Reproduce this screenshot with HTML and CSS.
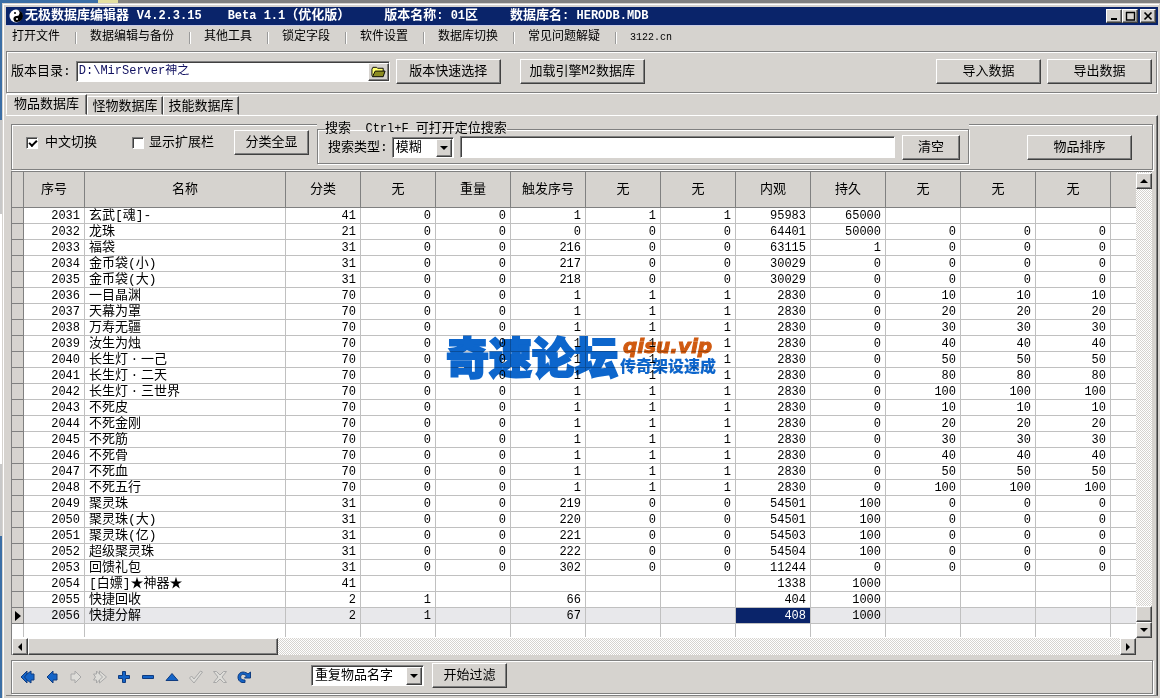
FILE: index.html
```html
<!DOCTYPE html>
<html lang="zh-CN">
<head>
<meta charset="utf-8">
<title>无极数据库编辑器</title>
<link rel="stylesheet" href="styles.css">
</head>
<body>
<div class="window">
  <header class="titlebar">
    <svg class="logo" viewBox="0 0 14 14"><circle cx="7" cy="7" r="6.500" fill="#fff"/><path d="M8 1a6 6 0 0 1 0 12 3 3 0 0 1-1-6 3 3 0 0 0 1-6z" fill="#000"/><circle cx="6" cy="4" r="1" fill="#000"/><circle cx="8" cy="10" r="1" fill="#fff"/></svg>
    <h1 class="caption"><span>无极数据库编辑器 <span class="lat">V4.2.3.15</span></span><span class="beta"><span class="lat">Beta 1.1</span>（优化版）</span><span class="version">版本名称<span class="lat">: 01</span>区</span><span>数据库名<span class="lat">: HERODB.MDB</span></span></h1>
    <div class="winbuttons">
      <button class="btn winbtn" aria-label="最小化"><svg viewBox="0 0 12 10"><path d="M3 8h6" stroke="#000" stroke-width="2"/></svg></button>
      <button class="btn winbtn" aria-label="最大化"><svg viewBox="0 0 12 10"><path d="M2 1.500h9M2.500 1v8h8V1" stroke="#000" stroke-width="1.400" fill="none"/></svg></button>
      <button class="btn winbtn close" aria-label="关闭"><svg viewBox="0 0 12 10"><path d="M2.500 1.500l7 7M9.500 1.500l-7 7" stroke="#000" stroke-width="1.700"/></svg></button>
    </div>
  </header>
  <nav class="menu">
    <a href="#">打开文件</a><a href="#">数据编辑与备份</a><a href="#">其他工具</a><a href="#">锁定字段</a><a href="#">软件设置</a><a href="#">数据库切换</a><a href="#">常见问题解疑</a><a href="#" class="site">3122.cn</a>
  </nav>
  <section class="panel pathbar">
    <label for="path">版本目录:</label>
    <div class="pathbox sunken">
      <input id="path" class="field" type="text" value="D:\MirServer神之">
      <button class="btn folder" aria-label="浏览"><svg viewBox="0 0 16 12"><path d="M1 10V3l1-2h4l1 1h6v3" fill="#ffff70" stroke="#000"/><path d="M1.500 11l3-6H15l-2 6z" fill="#8c8c20" stroke="#000"/></svg></button>
    </div>
    <button class="btn w105">版本快速选择</button>
    <button class="btn w125">加载引擎<span class="lat">M2</span>数据库</button>
    <span class="grow"></span>
    <button class="btn w105">导入数据</button>
    <button class="btn w105 snug">导出数据</button>
  </section>
  <div class="tabs" role="tablist">
    <button class="tab active" role="tab">物品数据库</button><button class="tab" role="tab">怪物数据库</button><button class="tab" role="tab">技能数据库</button>
  </div>
  <main class="page">
    <section class="panel filterbar">
      <label class="check first"><input type="checkbox" checked><span>中文切换</span></label>
      <label class="check"><input type="checkbox"><span>显示扩展栏</span></label>
      <button class="btn w75">分类全显</button>
      <div class="searchwrap">
        <fieldset class="search">
          <legend>搜索<span class="lat">  Ctrl+F </span>可打开定位搜索</legend>
          <label for="kind">搜索类型:</label>
          <span class="combo sunken kind"><select id="kind"><option>模糊</option></select><span class="btn drop"><svg viewBox="0 0 8 4"><path d="M0 0h8L4 4z"/></svg></span></span>
          <input class="field sunken query" type="text" aria-label="搜索内容">
          <button class="btn w58">清空</button>
        </fieldset>
      </div>
      <span class="grow"></span>
      <button class="btn w105 sort">物品排序</button>
    </section>
    <section class="grid">
      <div class="sheet">
        <table>
          <colgroup><col class="c-ind"><col class="c-seq"><col class="c-name"><col class="c-num" span="11"><col></colgroup>
          <thead><tr><th></th><th>序号</th><th>名称</th><th>分类</th><th>无</th><th>重量</th><th>触发序号</th><th>无</th><th>无</th><th>内观</th><th>持久</th><th>无</th><th>无</th><th>无</th><th></th></tr></thead>
          <tbody>
<tr><td><td>2031<td>玄武[魂]-<td>41<td>0<td>0<td>1<td>1<td>1<td>95983<td>65000<td><td><td><td></tr>
<tr><td><td>2032<td>龙珠<td>21<td>0<td>0<td>0<td>0<td>0<td>64401<td>50000<td>0<td>0<td>0<td></tr>
<tr><td><td>2033<td>福袋<td>31<td>0<td>0<td>216<td>0<td>0<td>63115<td>1<td>0<td>0<td>0<td></tr>
<tr><td><td>2034<td>金币袋(小)<td>31<td>0<td>0<td>217<td>0<td>0<td>30029<td>0<td>0<td>0<td>0<td></tr>
<tr><td><td>2035<td>金币袋(大)<td>31<td>0<td>0<td>218<td>0<td>0<td>30029<td>0<td>0<td>0<td>0<td></tr>
<tr><td><td>2036<td>一目晶渊<td>70<td>0<td>0<td>1<td>1<td>1<td>2830<td>0<td>10<td>10<td>10<td></tr>
<tr><td><td>2037<td>天幕为罩<td>70<td>0<td>0<td>1<td>1<td>1<td>2830<td>0<td>20<td>20<td>20<td></tr>
<tr><td><td>2038<td>万寿无疆<td>70<td>0<td>0<td>1<td>1<td>1<td>2830<td>0<td>30<td>30<td>30<td></tr>
<tr><td><td>2039<td>汝生为烛<td>70<td>0<td>0<td>1<td>1<td>1<td>2830<td>0<td>40<td>40<td>40<td></tr>
<tr><td><td>2040<td>长生灯<i>·</i>一己<td>70<td>0<td>0<td>1<td>1<td>1<td>2830<td>0<td>50<td>50<td>50<td></tr>
<tr><td><td>2041<td>长生灯<i>·</i>二天<td>70<td>0<td>0<td>1<td>1<td>1<td>2830<td>0<td>80<td>80<td>80<td></tr>
<tr><td><td>2042<td>长生灯<i>·</i>三世界<td>70<td>0<td>0<td>1<td>1<td>1<td>2830<td>0<td>100<td>100<td>100<td></tr>
<tr><td><td>2043<td>不死皮<td>70<td>0<td>0<td>1<td>1<td>1<td>2830<td>0<td>10<td>10<td>10<td></tr>
<tr><td><td>2044<td>不死金刚<td>70<td>0<td>0<td>1<td>1<td>1<td>2830<td>0<td>20<td>20<td>20<td></tr>
<tr><td><td>2045<td>不死筋<td>70<td>0<td>0<td>1<td>1<td>1<td>2830<td>0<td>30<td>30<td>30<td></tr>
<tr><td><td>2046<td>不死骨<td>70<td>0<td>0<td>1<td>1<td>1<td>2830<td>0<td>40<td>40<td>40<td></tr>
<tr><td><td>2047<td>不死血<td>70<td>0<td>0<td>1<td>1<td>1<td>2830<td>0<td>50<td>50<td>50<td></tr>
<tr><td><td>2048<td>不死五行<td>70<td>0<td>0<td>1<td>1<td>1<td>2830<td>0<td>100<td>100<td>100<td></tr>
<tr><td><td>2049<td>聚灵珠<td>31<td>0<td>0<td>219<td>0<td>0<td>54501<td>100<td>0<td>0<td>0<td></tr>
<tr><td><td>2050<td>聚灵珠(大)<td>31<td>0<td>0<td>220<td>0<td>0<td>54501<td>100<td>0<td>0<td>0<td></tr>
<tr><td><td>2051<td>聚灵珠(亿)<td>31<td>0<td>0<td>221<td>0<td>0<td>54503<td>100<td>0<td>0<td>0<td></tr>
<tr><td><td>2052<td>超级聚灵珠<td>31<td>0<td>0<td>222<td>0<td>0<td>54504<td>100<td>0<td>0<td>0<td></tr>
<tr><td><td>2053<td>回馈礼包<td>31<td>0<td>0<td>302<td>0<td>0<td>11244<td>0<td>0<td>0<td>0<td></tr>
<tr><td></td><td>2054</td><td>[白嫖]★神器★</td><td>41</td><td></td><td></td><td></td><td></td><td></td><td>1338</td><td>1000</td><td></td><td></td><td></td><td></td></tr>
<tr><td></td><td>2055</td><td>快捷回收</td><td>2</td><td>1</td><td></td><td>66</td><td></td><td></td><td>404</td><td>1000</td><td></td><td></td><td></td><td></td></tr>
<tr class="current"><td><svg class="pointer" viewBox="0 0 6 10"><path d="M0 0l6 5-6 5z"/></svg></td><td>2056</td><td>快捷分解</td><td>2</td><td>1</td><td></td><td>67</td><td></td><td></td><td class="selected">408</td><td>1000</td><td></td><td></td><td></td><td></td></tr>
<tr class="tail"><td></td><td></td><td></td><td></td><td></td><td></td><td></td><td></td><td></td><td></td><td></td><td></td><td></td><td></td><td></td></tr>
          </tbody>
        </table>
      </div>
      <div class="vscroll">
        <button class="btn sbtn" aria-label="向上"><svg viewBox="0 0 8 4"><path d="M0 4h8L4 0z"/></svg></button>
        <span class="grow"></span>
        <span class="btn sbtn"></span>
        <button class="btn sbtn" aria-label="向下"><svg viewBox="0 0 8 4"><path d="M0 0h8L4 4z"/></svg></button>
      </div>
      <div class="hscroll">
        <button class="btn sbtn" aria-label="向左"><svg class="side" viewBox="0 0 4 8"><path d="M4 0v8L0 4z"/></svg></button>
        <span class="btn hthumb"></span>
        <span class="grow"></span>
        <button class="btn sbtn" aria-label="向右"><svg class="side" viewBox="0 0 4 8"><path d="M0 0v8l4-4z"/></svg></button>
      </div>
    </section>
    <footer class="panel navbar">
      <button class="nav" aria-label="首条"><svg viewBox="0 0 16 16"><path d="M1 8l6-6v3l4-3v3h3v6h-3v3l-4-3v3z"/><path d="M7 5L4.500 8 7 11"/></svg></button>
      <button class="nav" aria-label="上一条"><svg viewBox="0 0 16 16"><path d="M3 8l6-6v3h4v6H9v3z"/></svg></button>
      <button class="nav off" aria-label="下一条"><svg viewBox="0 0 16 16"><path d="M13 8L7 2v3H3v6h4v3z"/></svg></button>
      <button class="nav off" aria-label="末条"><svg viewBox="0 0 16 16"><path d="M1.500 5h3V2l3 3V2l7 6-7 6v-3l-3 3v-3h-3l2-3zM7.500 5l3 3-3 3"/></svg></button>
      <button class="nav" aria-label="新增"><svg viewBox="0 0 16 16"><path d="M6.500 2.500h3v4h4v3h-4v4h-3v-4h-4v-3h4z"/></svg></button>
      <button class="nav" aria-label="删除"><svg viewBox="0 0 16 16"><path d="M2.500 6.500h11v3h-11z"/></svg></button>
      <button class="nav" aria-label="编辑"><svg viewBox="0 0 16 16"><path d="M2 11.500h12L8 4.500z"/></svg></button>
      <button class="nav off" aria-label="提交"><svg viewBox="0 0 16 16"><path d="M1.500 9l2-2 2.500 3 6.500-8 2 1L6 14z"/></svg></button>
      <button class="nav off" aria-label="取消"><svg viewBox="0 0 16 16"><path d="M1.500 2.500h3L8 6l3.500-3.500h3L10 8l4.500 5.500h-3L8 10l-3.500 3.500h-3L6 8z"/></svg></button>
      <button class="nav" aria-label="刷新"><svg viewBox="0 0 16 16"><path d="M9 13.500H6C0 12 1 3 7 3c2 0 4 1 5 2l2.500-2v6H8.500l2-2C7 3.500 3.500 6 5 9.500c1 1.500 2.500 1.500 4 1.500z"/></svg></button>
      <span class="combo sunken dup"><select aria-label="过滤方式"><option>重复物品名字</option></select><span class="btn drop"><svg viewBox="0 0 8 4"><path d="M0 0h8L4 4z"/></svg></span></span>
      <button class="btn w75">开始过滤</button>
    </footer>
  </main>
  <div class="watermark"><strong>奇速论坛</strong><div><em>qisu.vip</em><b>传奇架设速成</b></div></div>
</div>
</body>
</html>
```
FILE: styles.css
```css
*, *::before { box-sizing: border-box; }
body {
  margin: 0;
  min-height: 100vh;
  display: flex;
  flex-direction: column;
  padding: 3px 0 0 2px;
  overflow: hidden;
  color: #000;
  font: 13px/15px "Liberation Mono", "Noto Sans CJK SC", monospace;
  background:
    linear-gradient(90deg, #3b6ea5 98px, #e4e0a0 98px 118px, #808080 118px) top / 100% 3px no-repeat,
    linear-gradient(#3b6ea5 120px, #c8c8c8 120px 214px, #fff 214px 464px, #c8c8c8 464px 536px, #3b6ea5 536px);
}
button, input, select { font: inherit; color: inherit; }
button { padding: 0; }
.lat { font-size: 12px; white-space: pre; }
.grow { flex: 1; }

.window {
  position: relative;
  flex: 1;
  display: flex;
  flex-direction: column;
  padding: 3px 1px 2px 3px;
  background: #d6d3cf;
  border: solid #d6d3cf;
  border-width: 1px 1px 0;
  box-shadow: inset 1px 1px #fff;
}
.titlebar {
  display: flex;
  align-items: center;
  height: 19px;
  padding: 0 2px 0 3px;
  background: #0a246a;
  color: #fff;
  border-bottom: 1px solid #c9cbe6;
}
.logo { width: 14px; height: 14px; margin-right: 2px; }
.caption { display: flex; margin: 0; flex: 1; font-size: 13px; font-weight: bold; white-space: nowrap; }
.beta { margin-left: 26px; }
.version { margin: 0 32px 0 34px; }
.winbuttons { display: flex; }
.btn {
  display: inline-flex;
  align-items: center;
  justify-content: center;
  flex: none;
  height: 25px;
  background: #d6d3cf;
  border: 1px solid;
  border-color: #fff #404040 #404040 #fff;
  box-shadow: inset -1px -1px #808080;
}
.winbtn { width: 16px; height: 14px; }
.winbtn svg { width: 12px; height: 10px; }
.close { margin-left: 2px; }

.menu { display: flex; align-items: center; height: 25px; padding: 0 0 2px 6px; font-size: 12px; }
.menu a { display: flex; align-items: center; color: #000; text-decoration: none; white-space: nowrap; }
.menu a + a::before {
  content: "";
  width: 2px;
  height: 12px;
  margin: 0 13px 0 15px;
  border-left: 1px solid #9a9a9a;
  border-right: 1px solid #fff;
}
.menu .site { font-size: 10px; }

.panel {
  display: flex;
  align-items: center;
  border: 1px solid #808080;
  box-shadow: inset 1px 1px #fff, 1px 1px #fff;
}
.pathbar { height: 42px; margin-right: 1px; padding: 0 4px 1px; }
.pathbox { display: flex; flex: 0 1 314px; height: 21px; margin: 0 6px 0 5px; background: #fff; color: #101060; font-size: 12px; }
.sunken {
  border: 1px solid;
  border-color: #808080 #fff #fff #808080;
  box-shadow: inset 1px 1px #404040;
}
.field { min-width: 0; background: #fff; padding: 0 2px; }
.pathbox .field { flex: 1; border: 0; background: transparent; outline: 0; }
.folder { width: 21px; height: 18px; margin: 1px 0 0; }
.folder svg { width: 15px; height: 12px; }
.w58 { width: 58px; }
.w75 { width: 75px; }
.w105 { width: 105px; }
.w125 { width: 125px; margin-left: 19px; }
.snug { margin-left: 6px; }

.tabs { display: flex; align-items: flex-end; height: 22px; }
.tab {
  width: 76px;
  height: 19px;
  padding-top: 2px;
  background: #d6d3cf;
  border: 1px solid;
  border-color: #fff #404040 transparent #fff;
  box-shadow: inset -1px 0 #808080;
}
.tab.active { width: 81px; height: 21px; padding: 0; }
.page {
  flex: 1;
  display: flex;
  flex-direction: column;
  padding: 8px 4px 0 5px;
  border: 1px solid;
  border-color: #fff #404040 #808080 #fff;
  border-left: 0;
  box-shadow: inset -1px 0 #808080;
}
.filterbar { height: 46px; }
.check { display: flex; align-items: center; margin-left: 35px; padding-bottom: 9px; white-space: nowrap; }
.check span { margin-left: 7px; }
.check + .check span { margin-left: 5px; }
.check.first { margin-left: 14px; }
.check input {
  appearance: none;
  width: 12px;
  height: 12px;
  margin: 0;
  background: #fff;
  border: 1px solid;
  border-color: #808080 #fff #fff #808080;
  box-shadow: inset 1px 1px #404040;
}
.check input:checked::before {
  content: "";
  display: block;
  width: 8px;
  height: 5px;
  margin: 2px 0 0 2px;
  border: solid #000;
  border-width: 0 0 2px 2px;
  transform: rotate(-45deg);
}
.filterbar > .w75 { margin: 0 8px 9px 20px; }
.searchwrap { flex: 0 1 652px; align-self: flex-start; margin-top: -3px; background: #d6d3cf; }
.search {
  display: flex;
  align-items: center;
  height: 42px;
  min-width: 0;
  margin: 0;
  padding: 0 8px 5px 10px;
  border: 1px solid #808080;
  box-shadow: inset 1px 1px #fff, 1px 1px #fff;
}
.search legend { padding: 0; margin-left: -3px; height: 14px; line-height: 14px; }
.search label { white-space: nowrap; }
.combo { position: relative; display: inline-flex; flex: none; height: 21px; background: #fff; }
.combo select { appearance: none; width: 100%; border: 0; background: transparent; padding: 0 3px; outline: 0; }
.drop { position: absolute; right: 1px; top: 1px; width: 16px; height: 18px; pointer-events: none; }
.drop svg, .sbtn svg { width: 8px; height: 4px; }
.kind { width: 62px; margin: 0 6px 0 4px; }
.query { flex: 1; height: 22px; margin-right: 7px; }
.sort { margin-right: 20px; }

.grid {
  flex: 1;
  display: grid;
  grid-template-columns: minmax(0, 1fr) 16px;
  grid-template-rows: 1fr 17px;
  margin: 1px 1px 0 0;
  border: solid #808080;
  border-width: 1px 0 0 1px;
  background: #d6d3cf;
}
.sheet { overflow: hidden; background: #fff; }
table { width: 100%; table-layout: fixed; border-collapse: separate; border-spacing: 0; }
.c-ind { width: 12px; }
.c-seq { width: 61px; }
.c-name { width: 201px; }
.c-num { width: 75px; }
th, td { padding: 0; border: solid #c0c0c0; border-width: 0 1px 1px 0; white-space: nowrap; overflow: hidden; }
th { height: 36px; background: #d6d3cf; border-color: #808080; font-weight: normal; }
td { height: 16px; line-height: 14px; padding: 1px 4px 0 0; text-align: right; font-size: 12px; }
th:last-child, td:last-child { border-right: 0; }
td:nth-child(1) { padding: 0; background: #d6d3cf; border-color: #808080; text-align: center; }
td:nth-child(3) { padding: 1px 0 0 4px; text-align: left; font-size: 13px; }
td i { display: inline-block; width: 13px; line-height: 13px; text-align: center; font-style: normal; }
.current td { background: #e8e8eb; }
.current td:first-child { background: #d6d3cf; }
.current .selected { background: #0a246a; color: #fff; }
.pointer { display: block; width: 6px; height: 10px; margin: 0 auto 0 3px; }
.tail td { height: 13px; border-bottom: 0; }
.tail td:first-child { background: #fff; border-color: #c0c0c0; }
.vscroll, .hscroll { display: flex; background: repeating-conic-gradient(#fff 0 25%, #d6d3cf 0 50%) 0 0 / 2px 2px; }
.vscroll { flex-direction: column; padding-top: 1px; }
.sbtn { width: 16px; height: 16px; }
.sbtn .side { width: 4px; height: 8px; }
.hscroll .btn { height: 17px; }
.hthumb { width: 250px; }

.navbar { height: 34px; margin: 5px 0 1px; padding: 0 4px; }
.nav { display: flex; align-items: center; justify-content: center; flex: none; width: 24px; height: 24px; border: 0; background: transparent; }
.nav svg { width: 16px; height: 16px; fill: #1464c8; stroke: #103c80; }
.nav.off svg { fill: #deddd9; stroke: #a8a8a8; }
.dup { width: 113px; margin: 0 8px 3px 55px; }
.navbar .w75 { margin-bottom: 3px; }

.watermark {
  position: absolute;
  left: 50%;
  top: 325px;
  transform: translateX(-50%);
  display: flex;
  align-items: center;
  gap: 2px;
  color: #0d66cc;
  font-family: "Noto Sans CJK SC", sans-serif;
  font-weight: 900;
  white-space: nowrap;
  mix-blend-mode: multiply;
  pointer-events: none;
}
.watermark strong { font-size: 43px; line-height: 52px; font-weight: 900; -webkit-text-stroke: 2px #0d66cc; }
.watermark div { display: flex; flex-direction: column; }
.watermark em { font: italic bold 20px/20px "DejaVu Sans", sans-serif; color: #d05a10; padding-left: 3px; -webkit-text-stroke: 1px #d05a10; }
.watermark b { font-size: 16px; line-height: 18px; font-weight: 900; }
```
